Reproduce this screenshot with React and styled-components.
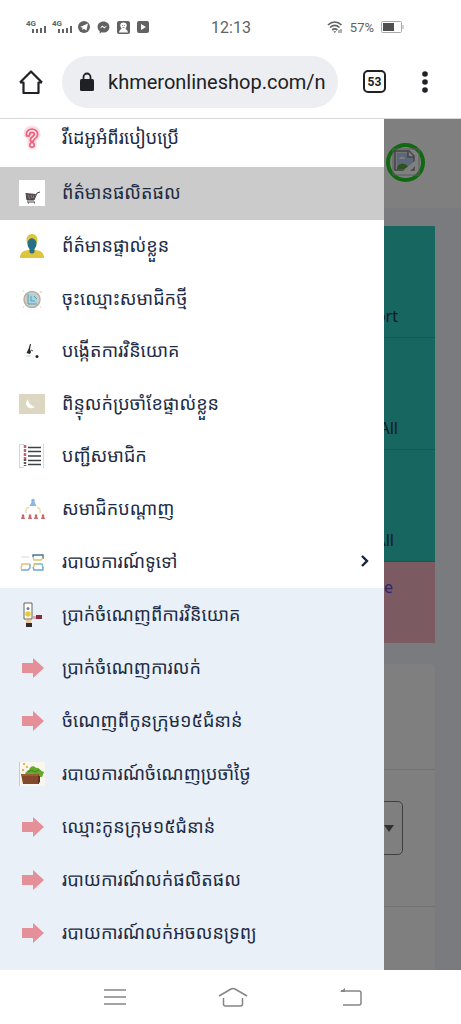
import styled, { createGlobalStyle, css } from "styled-components";

const WHITE = "#ffffff";
const INK = "#202124";
const NAVY = "#1d2b45";
const STATUS = "#626262";
const SELECTED = "#cbcbcb";
const SUBMENU = "#e9f0f7";
const TEAL = "#2eccbe";
const PINK = "#f8b4c4";

const GlobalStyle = createGlobalStyle`
  * {
    box-sizing: border-box;
  }

  body {
    margin: 0;
    background-color: ${WHITE};
    font-family: Roboto, "Noto Sans Khmer", "Noto Sans", sans-serif;
  }

  button {
    padding: 0;
    border: none;
    background: none;
  }

  svg {
    display: block;
    flex-shrink: 0;
  }
`;

const Phone = styled.div`
  width: 100%;
  height: 100vh;
  display: flex;
  overflow: hidden;
  flex-direction: column;
`;

const StatusBar = styled.header`
  height: 54px;
  display: grid;
  flex-shrink: 0;
  color: ${STATUS};
  align-items: center;
  padding: 0 57px 0 26px;
  grid-template-columns: 1fr auto 1fr;
`;

const StatusGroup = styled.div`
  gap: 7px;
  display: flex;
  font-size: 13px;
  align-items: center;
  justify-content: ${({ $end }) => ($end ? "flex-end" : "flex-start")};
`;

const SignalGroup = styled.div`
  gap: 5px;
  display: flex;
  margin-right: -2px;
`;

const Clock = styled.time`
  font-size: 16px;
  margin-left: 32px;
`;

const AddressBar = styled.div`
  gap: 18px;
  height: 65px;
  display: flex;
  flex-shrink: 0;
  align-items: center;
  padding: 0 23px 9px 18px;
  border-bottom: 1px solid #d8d8d8;
`;

const ToolButton = styled.button`
  width: 26px;
  height: 32px;
  display: flex;
  flex-shrink: 0;
  color: ${INK};
  align-items: center;
  justify-content: center;
`;

const AddressField = styled.label`
  flex: 1;
  gap: 13px;
  min-width: 0;
  height: 52px;
  display: flex;
  color: ${INK};
  margin-right: 7px;
  align-items: center;
  border-radius: 26px;
  padding: 0 9px 0 17px;
  background-color: #eceef1;

  input {
    flex: 1;
    padding: 0;
    min-width: 0;
    border: none;
    outline: none;
    color: ${INK};
    font-size: 20px;
    background: none;
    font-family: Roboto, sans-serif;
  }
`;

const TabsButton = styled(ToolButton)`
  width: 23px;
  height: 23px;
  font-size: 12px;
  font-weight: 700;
  margin-right: 8px;
  border-radius: 5px;
  border: 2px solid ${INK};
  font-family: Roboto, sans-serif;
`;

const Viewport = styled.div`
  flex: 1;
  min-height: 0;
  overflow: hidden;
  position: relative;
`;

const Page = styled.main`
  min-height: 100%;
  background-color: #f4f6fc;
`;

const PageHeader = styled.div`
  height: 89px;
  display: flex;
  padding: 0 36px 3px;
  align-items: center;
  justify-content: flex-end;
  background-color: ${WHITE};
`;

const Avatar = styled.div`
  width: 39px;
  height: 39px;
  display: flex;
  border-radius: 50%;
  align-items: center;
  justify-content: center;
  border: 4px solid #20d020;
`;

const Cards = styled.div`
  display: flex;
  padding: 18px 26px 0;
  flex-direction: column;
`;

const Tile = styled.section`
  height: 112px;
  display: flex;
  color: #22334e;
  font-size: 16px;
  align-items: flex-end;
  padding: 0 37px 10px 0;
  justify-content: flex-end;
  background-color: ${TEAL};
  border-bottom: 1px solid #27b3a8;
  font-family: "Noto Sans", sans-serif;

  ${({ $narrow }) =>
    $narrow &&
    css`
      padding-right: 41px;
    `}

  ${({ $pink }) =>
    $pink &&
    css`
      height: 81px;
      color: #5a50d8;
      border-bottom: none;
      align-items: flex-start;
      padding: 14px 42px 0 0;
      background-color: ${PINK};
    `}
`;

const Panel = styled.section`
  margin-top: 21px;
  border-radius: 5px;
  background-color: ${WHITE};
`;

const PanelRow = styled.div`
  display: flex;
  padding: 0 32px;
  align-items: center;
  justify-content: flex-end;
  border-bottom: 1px solid #e4e4e8;
  height: ${({ $tall }) => ($tall ? "137px" : "106px")};

  ${({ $tall }) =>
    $tall &&
    css`
      padding-bottom: 20px;
    `}

  select {
    width: 200px;
    height: 54px;
    appearance: none;
    border-radius: 5px;
    background: none;
    border: 1px solid #808080;
  }
`;

const SelectBox = styled.label`
  display: grid;
  align-items: center;
  justify-items: end;

  > * {
    grid-area: 1 / 1;
  }

  svg {
    margin-right: 9px;
    pointer-events: none;
  }
`;

const Backdrop = styled.div`
  inset: 0;
  position: absolute;
  background-color: rgba(0, 0, 0, 0.5);
`;

const Drawer = styled.nav`
  top: 0;
  left: 0;
  bottom: 0;
  width: 384px;
  max-width: 84%;
  display: flex;
  position: absolute;
  flex-direction: column;
  background-color: ${WHITE};
`;

const MenuList = styled.ul`
  margin: 0;
  padding: 0;
  display: grid;
  list-style: none;

  ${({ $fill }) =>
    $fill &&
    css`
      flex: 1;
      grid-auto-rows: 1fr;
    `}

  ${({ $sub }) =>
    $sub &&
    css`
      padding-bottom: 11px;
      grid-auto-rows: 53px;
      background-color: ${SUBMENU};
    `}
`;

const FirstList = styled(MenuList)`
  height: 48px;
  padding-bottom: 11px;
`;

const MenuLink = styled.a`
  gap: 17px;
  height: 100%;
  display: flex;
  color: ${NAVY};
  font-size: 18px;
  line-height: 26px;
  align-items: center;
  text-decoration: none;
  padding: 0 13px 0 19px;
  background-color: ${({ $selected }) => ($selected ? SELECTED : "transparent")};

  span {
    flex: 1;
    white-space: nowrap;
  }
`;

const SystemNav = styled.footer`
  height: 54px;
  display: flex;
  padding-left: 4px;
  flex-shrink: 0;
  justify-content: center;
  background-color: ${WHITE};
`;

const SystemButton = styled.button`
  width: 118px;
  display: flex;
  align-items: center;
  justify-content: center;
`;

const Signal = () => (
  <svg width="21" height="14" viewBox="0 0 21 14" fill={STATUS}>
    <text x="0" y="6" fontSize="8" fontWeight="700" fontFamily="Roboto">
      4G
    </text>
    <path d="M6 9h2v4H6zM10 9h2v4h-2zM14 8h2v5h-2zM18 6h2v7h-2z" />
  </svg>
);

const Telegram = () => (
  <svg width="12" height="12" viewBox="0 0 12 12">
    <circle cx="6" cy="6" r="6" fill={STATUS} />
    <path d="M2 6l8-3.6-1.6 7.2-2.6-1.9-1.3 1.3-.3-2.4z" fill={WHITE} />
  </svg>
);

const Messenger = () => (
  <svg width="13" height="13" viewBox="0 0 13 13">
    <path
      d="M6.5.5C3 .5.6 2.8.6 5.9c0 1.8.8 3.2 2 4.2v2.3l2-1.1c.6.1 1.2.2 1.9.2 3.4 0 5.9-2.5 5.9-5.6S10 .5 6.5.5z"
      fill={STATUS}
    />
    <path d="M2.700 7.600l2.600-3 1.900 1.500 3-1.500-2.700 3-1.900-1.500z" fill={WHITE} />
  </svg>
);

const Portrait = () => (
  <svg width="13" height="13" viewBox="0 0 13 13">
    <rect width="13" height="13" rx="2" fill={STATUS} />
    <path
      d="M6.500 1.500c2.400 0 3.500 1.400 3.200 3.200C9.500 6 9 6.700 8.500 7.400c.1 1 2.200 1.200 2.500 4.100H2c.3-2.900 2.400-3.100 2.500-4.100-.6-.7-1-1.400-1.200-2.700-.3-1.800.8-3.200 3.200-3.200z"
      fill={WHITE}
    />
    <path d="M5 4.500h1M7 4.500h1M5.500 6.500h2" stroke={STATUS} strokeWidth=".7" />
  </svg>
);

const Video = () => (
  <svg width="12" height="12" viewBox="0 0 12 12">
    <rect width="12" height="12" rx="2" fill={STATUS} />
    <path d="M4 3l5 3-5 3z" fill={WHITE} />
  </svg>
);

const Wifi = () => (
  <svg width="16" height="13" viewBox="0 0 16 13" fill="none" stroke={STATUS} strokeWidth="1.700">
    <path d="M1 4c4-4 9.500-4 13.500 0M3 6.500c3-2.800 6.500-2.800 9.500 0M5.200 9c1.800-1.600 3.400-1.600 5.200 0" />
    <path d="M6.300 10.200h3L7.800 12z" fill={STATUS} stroke="none" />
    <path d="M12 9v3M14 8v4" strokeWidth="1" />
  </svg>
);

const Battery = () => (
  <svg width="23" height="12" viewBox="0 0 23 12">
    <rect x=".5" y=".5" width="20" height="11" rx="1" fill={WHITE} stroke="#a8a8a8" />
    <path d="M2 2h11v8H2z" fill="#505050" />
    <path d="M22 4v4" stroke="#a8a8a8" />
  </svg>
);

const HomeOutline = () => (
  <svg width="26" height="26" viewBox="0 0 26 26" fill="none" stroke={INK} strokeWidth="2.200">
    <path d="M2 13.500L13 2.500l11 11M2 13.500h3.500V24h15V13.500H24" strokeLinejoin="round" />
  </svg>
);

const Lock = () => (
  <svg width="16" height="20" viewBox="0 0 16 20">
    <rect x="1" y="7" width="14" height="12" rx="1.500" fill={INK} />
    <path d="M4.500 8V5a3.500 3.500 0 017 0v3" fill="none" stroke={INK} strokeWidth="1.800" />
  </svg>
);

const Dots = () => (
  <svg width="6" height="22" viewBox="0 0 6 22" fill={INK}>
    <circle cx="3" cy="3" r="2.800" />
    <circle cx="3" cy="11" r="2.800" />
    <circle cx="3" cy="19" r="2.800" />
  </svg>
);

const BrokenImage = () => (
  <svg width="28" height="28" viewBox="0 0 28 28">
    <path d="M1 1h26v26H1z" fill="none" stroke="#b8b8b8" />
    <path d="M3 3h14l5 5v14H3z" fill="#e9edf5" stroke="#84848c" strokeWidth="1.500" />
    <path d="M5 5h11v5h5v5l-9 6H5z" fill="#b9d0f2" />
    <path d="M5 21c0-6 9-7 11-2l-4 2z" fill="#59a73b" />
    <path d="M7 11c1-3 5-3 6 0z" fill={WHITE} />
    <path d="M16 3v6h6" fill={WHITE} stroke="#84848c" strokeWidth="1.500" />
    <path d="M24 12L11 23h7l6-6z" fill={WHITE} />
  </svg>
);

const Question = () => (
  <svg width="26" height="26" viewBox="0 0 26 26" fill="none" strokeLinecap="round">
    <path d="M9 9c0-5 8-5 8 0 0 3-4 3.500-4 6v5" stroke="#fcdbe1" strokeWidth="9" />
    <path d="M9 9.500c0-5 8-5 8 0 0 3-4 3-4 5.500" stroke="#ee5f7c" strokeWidth="5" />
    <path d="M9 9.500c0-5 8-5 8 0 0 3-4 3-4 5.500" stroke="#ffe9ed" strokeWidth="1.500" />
    <circle cx="13" cy="20" r="2.200" fill="#ffe9ed" stroke="#ee5f7c" strokeWidth="1.600" />
  </svg>
);

const Cart = () => (
  <svg width="26" height="26" viewBox="0 0 26 26">
    <path d="M0 0h26v26H0z" fill={WHITE} />
    <path d="M7 13l10 1-2 6H8z" fill="#554b4d" />
    <path d="M7 13l1 7h7l3-7 3-1M8 22h8" fill="none" stroke="#4a4446" />
    <path d="M9 15l2 4M12 15l1 3M15 15l-1 3" stroke="#b8a4a6" strokeWidth=".6" />
    <path d="M9 23h1M15 23h1" stroke="#4a4446" />
  </svg>
);

const Person = () => (
  <svg width="26" height="26" viewBox="0 0 26 26">
    <path d="M13 1c4 0 5.500 3 5.500 6.500 0 2-1 3-1.500 4H9c-.5-1-1.500-2-1.500-4C7.500 4 9 1 13 1z" fill="#dfc43d" />
    <path d="M1 25c0-6 4-7.500 8.500-8h7c4.500.5 8.500 2 8.500 8z" fill="#dfc43d" />
    <path d="M13 5c4 2 4.500 3 4.500 6 0 2.500-1.500 4-2 5v3c-1 2-4 2-5 0v-3c-.5-1-2-2.500-2-5 0-3 1-5 4.500-6z" fill="#28708a" />
  </svg>
);

const Register = () => (
  <svg width="26" height="26" viewBox="0 0 26 26">
    <circle cx="13" cy="13.500" r="8" fill="#cfcdc6" stroke="#b9afa4" strokeWidth="1.500" />
    <path d="M9 8h6l3 3v7H9z" fill="#a9d3dc" />
    <path d="M9 8v10h9M12 10v5h4M15 10l3 3" fill="none" stroke="#5b9fb3" />
    <path d="M4 5h1M21 6h2M4 21h1M21 21h1" stroke="#efb58f" />
  </svg>
);

const Invest = () => (
  <svg width="26" height="26" viewBox="0 0 26 26">
    <path d="M11 6l-1.500 5-2 4 3.500 1 1-2-1-3 1-5z" fill="#252525" />
    <path d="M12 12l2 1" stroke="#555" />
    <path d="M7 18h5" stroke="#b9d8df" />
    <circle cx="18" cy="18.500" r="1.500" fill="#252525" />
  </svg>
);

const Moon = () => (
  <svg width="26" height="20" viewBox="0 0 26 20">
    <path d="M0 0h26v20H0z" fill="#ddd6c1" />
    <path d="M9 5c0 4 3 6.500 7 8-3 2.500-8 1.500-9-3 0-2 1-4 2-5z" fill={WHITE} />
  </svg>
);

const Checklist = () => (
  <svg width="26" height="26" viewBox="0 0 26 26" fill="none">
    <path d="M.5 25V1M24.500 1v24M1 1.500h4M1 24.500h4" stroke="#d3d6da" />
    <path d="M9 4.500h13M9 8.500h13M9 13h13M9 17.500h13M9 21.500h13" stroke="#3c4248" strokeWidth="1.500" />
    <path d="M6 2v14" stroke="#c4626d" strokeWidth="2.500" strokeDasharray="3 1" />
    <path d="M6 16v7" stroke="#555b5b" strokeWidth="2.500" strokeDasharray="2 1" />
  </svg>
);

const Network = () => (
  <svg width="26" height="26" viewBox="0 0 26 26">
    <circle cx="14" cy="4.500" r="1.800" fill="#8db6e5" />
    <path d="M10.500 10l2.500-5h2l2.500 5z" fill="#8db6e5" />
    <path d="M10 11q-4 2-3 6M18 11q4 2 3 6" fill="none" stroke="#ecdcae" strokeWidth="1.500" />
    {[4, 11, 17, 24].map(x => (
      <g key={x} fill="#cf6868">
        <path d={`M${x - 2} 23l1-3h2l1 3z`} />
        <circle cx={x} cy="19.500" r="1.200" />
      </g>
    ))}
  </svg>
);

const Reports = () => (
  <svg width="26" height="26" viewBox="0 0 26 26" fill="none" strokeWidth="1.400">
    <path d="M2 8h8" stroke="#e4e4e8" />
    <path d="M14 8V6h10v4" stroke="#4a7485" />
    <path d="M24 9l-2 2h-7l-1-3" stroke="#d8c774" />
    <path d="M2 20l1-5h8" stroke="#dfc471" />
    <path d="M11 15v4l-2 2H2" stroke="#78a5dd" />
    <path d="M15 15h8l1 4" stroke="#78c1c8" />
    <path d="M24 18v3h-9l-1-3" stroke="#71a4d2" />
    <path d="M15 18v-3h3" stroke="#dfc471" />
  </svg>
);

const Income = () => (
  <svg width="26" height="26" viewBox="0 0 26 26">
    <path d="M5 1h8v16H5z" fill="#fffef4" stroke="#66645f" />
    <circle cx="9" cy="6.500" r="1.500" fill="#6c8292" />
    <circle cx="9" cy="12" r="2.800" fill="#e9c83d" />
    <path d="M7 18h5v3H7z" fill="#e8c7a0" />
    <path d="M7 21h6v4H7z" fill="#342b2b" />
    <path d="M14 14h3v3h-3z" fill="#e5aaa8" />
    <path d="M17 13h6v4h-6z" fill="#872c3b" />
  </svg>
);

const Arrow = () => (
  <svg width="26" height="26" viewBox="0 0 26 26">
    <path d="M3 8h11V3l11 10-11 10v-5H3z" fill="#e58f98" />
  </svg>
);

const Harvest = () => (
  <svg width="26" height="26" viewBox="0 0 26 26">
    <path d="M0 1h26v24H0z" fill="#f8f6ef" />
    <path d="M.5 1v24" stroke="#d3cdbd" />
    <path d="M6 12c2-1 2-3 4-3 1-4 5-5 7-2 3-1 4 3 8 4l-2 5H9z" fill="#65a92c" />
    <path d="M9 11l4-2 3 2 4-2" stroke="#3f7e20" fill="none" />
    <path d="M2 13h18v10H4z" fill="#84482a" />
    <path d="M3 14h16" stroke="#b17247" />
    <path d="M19 15h2v6l-2 2z" fill="#5f301e" />
    <path d="M4 3h2M7 6h2M3 9h2" stroke="#e3b848" strokeWidth="2" />
  </svg>
);

const Chevron = () => (
  <svg width="12" height="14" viewBox="0 0 12 14">
    <path d="M3 1l5 5-5 5" fill="none" stroke="#17223c" strokeWidth="2.400" />
  </svg>
);

const MAIN_ITEMS = [
  { label: "ព័ត៌មានផលិតផល", icon: Cart, selected: true },
  { label: "ព័ត៌មានផ្ទាល់ខ្លួន", icon: Person },
  { label: "ចុះឈ្មោះសមាជិកថ្មី", icon: Register },
  { label: "បង្កើតការវិនិយោគ", icon: Invest },
  { label: "ពិន្ទុលក់ប្រចាំខែផ្ទាល់ខ្លួន", icon: Moon },
  { label: "បញ្ជីសមាជិក", icon: Checklist },
  { label: "សមាជិកបណ្តាញ", icon: Network },
  { label: "របាយការណ៍ទូទៅ", icon: Reports, expandable: true },
];

const SUB_ITEMS = [
  { label: "ប្រាក់ចំណេញពីការវិនិយោគ", icon: Income },
  { label: "ប្រាក់ចំណេញការលក់", icon: Arrow },
  { label: "ចំណេញពីកូនក្រុម១៥ជំនាន់", icon: Arrow },
  { label: "របាយការណ៍ចំណេញប្រចាំថ្ងៃ", icon: Harvest },
  { label: "ឈ្មោះកូនក្រុម១៥ជំនាន់", icon: Arrow },
  { label: "របាយការណ៍លក់ផលិតផល", icon: Arrow },
  { label: "របាយការណ៍លក់អចលនទ្រព្យ", icon: Arrow },
];

const MenuItem = ({ label, icon: Icon, selected, expandable }) => (
  <li>
    <MenuLink href="#" $selected={selected}>
      <Icon />
      <span>{label}</span>
      {expandable && <Chevron />}
    </MenuLink>
  </li>
);

const App = () => (
  <>
    <GlobalStyle />
    <Phone>
      <StatusBar>
        <StatusGroup>
          <SignalGroup>
            <Signal />
            <Signal />
          </SignalGroup>
          <Telegram />
          <Messenger />
          <Portrait />
          <Video />
        </StatusGroup>
        <Clock>12:13</Clock>
        <StatusGroup $end>
          <Wifi />
          57%
          <Battery />
        </StatusGroup>
      </StatusBar>

      <AddressBar>
        <ToolButton aria-label="Home">
          <HomeOutline />
        </ToolButton>
        <AddressField>
          <Lock />
          <input aria-label="Address" defaultValue="khmeronlineshop.com/n" />
        </AddressField>
        <TabsButton aria-label="Tabs">53</TabsButton>
        <ToolButton aria-label="More">
          <Dots />
        </ToolButton>
      </AddressBar>

      <Viewport>
        <Page>
          <PageHeader>
            <Avatar>
              <BrokenImage />
            </Avatar>
          </PageHeader>
          <Cards>
            <Tile>Report</Tile>
            <Tile>All</Tile>
            <Tile $narrow>All</Tile>
            <Tile $pink>e</Tile>
            <Panel>
              <PanelRow />
              <PanelRow $tall>
                <SelectBox>
                  <select aria-label="Filter" />
                  <svg width="10" height="7" viewBox="0 0 10 7">
                    <path d="M0 0h10L5 7z" fill="#606060" />
                  </svg>
                </SelectBox>
              </PanelRow>
              <PanelRow />
            </Panel>
          </Cards>
        </Page>
        <Backdrop />
        <Drawer>
          <FirstList>
            <MenuItem label="វីដេអូអំពីរបៀបប្រើ" icon={Question} />
          </FirstList>
          <MenuList $fill>
            {MAIN_ITEMS.map(item => (
              <MenuItem key={item.label} {...item} />
            ))}
          </MenuList>
          <MenuList $sub>
            {SUB_ITEMS.map(item => (
              <MenuItem key={item.label} {...item} />
            ))}
          </MenuList>
        </Drawer>
      </Viewport>

      <SystemNav>
        <SystemButton aria-label="Recent apps">
          <svg width="22" height="18" viewBox="0 0 22 18" stroke="#858585" strokeWidth="1.500">
            <path d="M0 2h22M0 9h22M0 16h22" />
          </svg>
        </SystemButton>
        <SystemButton aria-label="Home screen">
          <svg width="30" height="20" viewBox="0 0 30 20" fill="none" stroke="#858585" strokeWidth="1.500">
            <path d="M1 9l12-7q2-1 4 0l12 7M5.500 11v6q0 2 2 2h15q2 0 2-2v-6" />
          </svg>
        </SystemButton>
        <SystemButton aria-label="Back">
          <svg width="24" height="18" viewBox="0 0 24 18" fill="none" stroke="#858585" strokeWidth="1.500">
            <path d="M2 3h18q2 0 2 2v10q0 2-2 2H4" />
            <path d="M1 4l5-4v4z" fill="#858585" stroke="none" />
          </svg>
        </SystemButton>
      </SystemNav>
    </Phone>
  </>
);

export default App;
